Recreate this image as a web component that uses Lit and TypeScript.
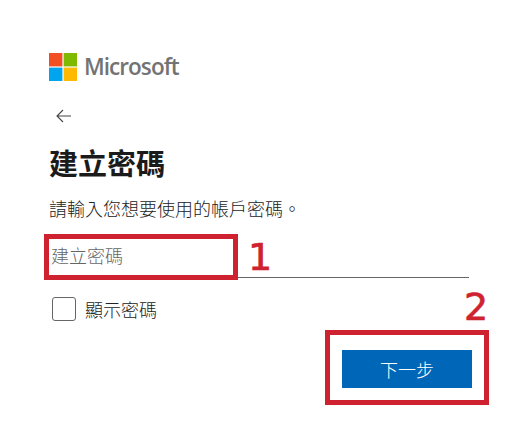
import { LitElement, html, css } from "lit";
import { customElement } from "lit/decorators.js";

@customElement("app-root")
export class AppRoot extends LitElement {
  static styles = css`
    :host {
      display: block;
      position: relative;
      width: 526px;
      height: 440px;
      background: #fff;
      overflow: hidden;
      font-family: "Noto Sans CJK TC", "Noto Sans", sans-serif;
      color: #1b1b1b;
    }
    .card {
      display: flex;
      flex-direction: column;
      padding: 53px 57px 0 49px;
      box-sizing: border-box;
      height: 100%;
    }
    .logo { display: flex; align-items: center; gap: 7px; height: 28px; }
    .logo svg { display: block; }
    .brand {
      font-family: "Open Sans", "Noto Sans", sans-serif;
      font-size: 22.5px;
      font-weight: 600;
      letter-spacing: -0.95px;
      color: #737373;
      line-height: 28px;
    }
    .back { margin: 28px 0 0 7px; height: 14px; }
    .back svg { display: block; }
    h1 {
      margin: 19px 0 0;
      font-size: 29px;
      line-height: 40px;
      font-weight: 700;
      color: #1b1b1b;
    }
    .desc {
      margin: 13px 0 0 0;
      font-size: 18px;
      line-height: 26px;
      font-weight: 300;
      color: #222;
    }
    .field {
      margin-top: 12px;
      height: 45px;
      padding-left: 2px;
      border-bottom: 1px solid #666;
      font-size: 18px;
      line-height: 44px;
      font-weight: 300;
      color: #666;
      box-sizing: border-box;
    }
    .check {
      display: flex;
      align-items: center;
      gap: 9px;
      margin: 19px 0 0 3px;
      font-size: 18px;
      line-height: 24px;
      font-weight: 300;
      color: #222;
    }
    .box {
      width: 22px;
      height: 22px;
      border: 1px solid #666;
      border-radius: 3px;
      background: #fff;
    }
    .actions { display: flex; justify-content: flex-end; margin-top: 29px; }
    .next {
      width: 130px;
      height: 38px;
      margin-right: -3px;
      border: none;
      padding: 0;
      background: #0067b8;
      color: #fff;
      font-family: inherit;
      font-size: 18px;
      font-weight: 300;
    }
    .mark {
      position: absolute;
      box-sizing: border-box;
      border: 5px solid #cf2230;
      pointer-events: none;
    }
    .mark.one { left: 44px; top: 234px; width: 194px; height: 46px; }
    .mark.two { left: 325px; top: 330px; width: 164px; height: 75px; }
    .num {
      position: absolute;
      font-family: "DejaVu Sans", sans-serif;
      font-size: 38px;
      line-height: 40px;
      font-weight: 400;
      color: #cf2230;
      -webkit-text-stroke: 0.7px #cf2230;
    }
    .num.one { left: 248px; top: 237px; }
    .num.two { left: 464px; top: 287px; }
  `;

  render() {
    return html`
      <div class="card">
        <div class="logo">
          <svg width="28" height="28" viewBox="0 0 28 28" aria-hidden="true">
            <rect x="0" y="0" width="13.4" height="13.4" fill="#f25022"></rect>
            <rect x="14.6" y="0" width="13.4" height="13.4" fill="#7fba00"></rect>
            <rect x="0" y="14.6" width="13.4" height="13.4" fill="#00a4ef"></rect>
            <rect x="14.6" y="14.6" width="13.4" height="13.4" fill="#ffb900"></rect>
          </svg>
          <span class="brand">Microsoft</span>
        </div>
        <div class="back">
          <svg width="16" height="14" viewBox="0 0 16 14" fill="none" stroke="#444" stroke-width="1.1" aria-hidden="true">
            <path d="M15 7H1M7 1L1 7l6 6"></path>
          </svg>
        </div>
        <h1>建立密碼</h1>
        <p class="desc">請輸入您想要使用的帳戶密碼。</p>
        <div class="field">建立密碼</div>
        <label class="check"><span class="box"></span>顯示密碼</label>
        <div class="actions"><button class="next">下一步</button></div>
      </div>
      <div class="mark one"></div>
      <div class="num one">1</div>
      <div class="mark two"></div>
      <div class="num two">2</div>
    `;
  }
}
